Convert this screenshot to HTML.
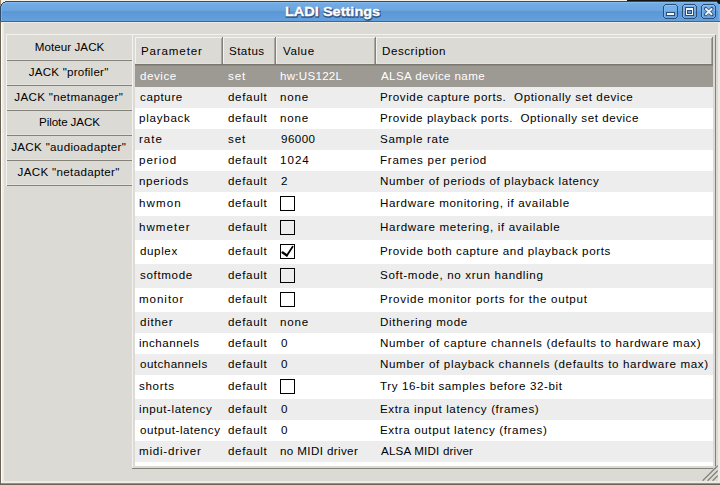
<!DOCTYPE html>
<html><head><meta charset="utf-8"><title>LADI Settings</title>
<style>
html,body{margin:0;padding:0;background:#dcdad5;overflow:hidden;}
svg{display:block;font-family:"Liberation Sans",sans-serif;}
</style></head><body>
<svg width="720" height="485" viewBox="0 0 720 485" shape-rendering="crispEdges">
<rect x="0" y="0" width="720" height="485" fill="#dcdad5"/>
<rect x="0" y="21" width="1" height="464" fill="#6b6254"/>
<rect x="1" y="22" width="1" height="462" fill="#ffffff"/>
<rect x="2" y="22" width="2" height="460" fill="#eeebe6"/>
<rect x="718" y="22" width="2" height="460" fill="#eeebe6"/>
<rect x="2" y="481" width="718" height="2" fill="#eeebe6"/>
<rect x="1" y="483" width="719" height="1" fill="#9a9182"/>
<rect x="0" y="484" width="720" height="1" fill="#6b6254"/>
<rect x="1" y="22" width="719" height="1" fill="#ede8e1"/>
<rect x="0" y="0" width="627" height="1" fill="#f7f0e4"/>
<rect x="627" y="0" width="93" height="1" fill="#141410"/>
<rect x="0" y="0" width="1" height="6" fill="#9c8a6d"/>
<rect x="1" y="1" width="4" height="1" fill="#f7f0e4"/>
<rect x="1" y="2" width="2" height="1" fill="#f7f0e4"/>
<rect x="1" y="3" width="1" height="1" fill="#f7f0e4"/>
<rect x="717" y="1" width="3" height="1" fill="#141410"/>
<rect x="718" y="2" width="2" height="1" fill="#141410"/>
<rect x="719" y="3" width="1" height="1" fill="#141410"/>
<rect x="5" y="1" width="712" height="1" fill="#2c4b70"/>
<rect x="3" y="2" width="2" height="1" fill="#2c4b70"/>
<rect x="2" y="3" width="1" height="1" fill="#2c4b70"/>
<rect x="1" y="4" width="1" height="2" fill="#2c4b70"/>
<rect x="0" y="6" width="1" height="15" fill="#2d4a6a"/>
<rect x="717" y="2" width="1" height="1" fill="#2c4b70"/>
<rect x="718" y="3" width="1" height="1" fill="#2c4b70"/>
<rect x="5" y="2" width="712" height="1" fill="#84baee"/>
<rect x="3" y="3" width="715" height="1" fill="#74ace5"/>
<rect x="2" y="4" width="718" height="1" fill="#72aae4"/>
<rect x="2" y="5" width="718" height="1" fill="#71a9e3"/>
<rect x="1" y="6" width="719" height="1" fill="#70a8e2"/>
<rect x="1" y="7" width="719" height="1" fill="#6fa7e1"/>
<rect x="1" y="8" width="719" height="1" fill="#6ea6e1"/>
<rect x="1" y="9" width="719" height="1" fill="#6da5e0"/>
<rect x="1" y="10" width="719" height="1" fill="#6ba4df"/>
<rect x="1" y="11" width="719" height="1" fill="#5b98d6"/>
<rect x="1" y="12" width="719" height="1" fill="#5b98d6"/>
<rect x="1" y="13" width="719" height="1" fill="#5c99d7"/>
<rect x="1" y="14" width="719" height="1" fill="#5d9ad7"/>
<rect x="1" y="15" width="719" height="1" fill="#5e9bd8"/>
<rect x="1" y="16" width="719" height="1" fill="#5f9cd9"/>
<rect x="1" y="17" width="719" height="1" fill="#609dda"/>
<rect x="1" y="18" width="719" height="1" fill="#619edb"/>
<rect x="1" y="19" width="719" height="1" fill="#629fdb"/>
<rect x="1" y="20" width="719" height="1" fill="#63a0dc"/>
<rect x="1" y="6" width="1" height="15" fill="#7ab3ea"/>
<rect x="3" y="3" width="2" height="1" fill="#84baee"/>
<rect x="2" y="4" width="1" height="2" fill="#84baee"/>
<rect x="719" y="4" width="1" height="17" fill="#7ab3ea"/>
<rect x="718" y="4" width="1" height="17" fill="#6fa9e3"/>
<rect x="0" y="21" width="720" height="1" fill="#3668a0"/>
<text x="285.5" y="16.5" fill="#2e5583" stroke="#2e5583" stroke-width="1.6" stroke-linejoin="round" font-size="13.2" font-weight="bold" textLength="95.2" lengthAdjust="spacingAndGlyphs" shape-rendering="auto">LADI Settings</text>
<text x="285" y="16" fill="#ffffff" stroke="#ffffff" stroke-width="0.35" font-size="13.2" font-weight="bold" textLength="95.2" lengthAdjust="spacingAndGlyphs">LADI Settings</text>
<rect x="664" y="5" width="13" height="6" fill="#77b0e8"/>
<rect x="664" y="11" width="13" height="7" fill="#68a3df"/>
<rect x="665" y="5" width="11" height="1" fill="#8cc2f2"/>
<rect x="664" y="6" width="1" height="11" fill="#7fb7ec"/>
<rect x="665" y="4" width="11" height="1" fill="#2c4f78"/>
<rect x="665" y="18" width="11" height="1" fill="#2c4f78"/>
<rect x="663" y="6" width="1" height="11" fill="#2c4f78"/>
<rect x="677" y="6" width="1" height="11" fill="#2c4f78"/>
<rect x="664" y="5" width="1" height="1" fill="#2c4f78"/>
<rect x="676" y="5" width="1" height="1" fill="#2c4f78"/>
<rect x="664" y="17" width="1" height="1" fill="#2c4f78"/>
<rect x="676" y="17" width="1" height="1" fill="#2c4f78"/>
<rect x="683" y="5" width="13" height="6" fill="#77b0e8"/>
<rect x="683" y="11" width="13" height="7" fill="#68a3df"/>
<rect x="684" y="5" width="11" height="1" fill="#8cc2f2"/>
<rect x="683" y="6" width="1" height="11" fill="#7fb7ec"/>
<rect x="684" y="4" width="11" height="1" fill="#2c4f78"/>
<rect x="684" y="18" width="11" height="1" fill="#2c4f78"/>
<rect x="682" y="6" width="1" height="11" fill="#2c4f78"/>
<rect x="696" y="6" width="1" height="11" fill="#2c4f78"/>
<rect x="683" y="5" width="1" height="1" fill="#2c4f78"/>
<rect x="695" y="5" width="1" height="1" fill="#2c4f78"/>
<rect x="683" y="17" width="1" height="1" fill="#2c4f78"/>
<rect x="695" y="17" width="1" height="1" fill="#2c4f78"/>
<rect x="702" y="5" width="13" height="6" fill="#77b0e8"/>
<rect x="702" y="11" width="13" height="7" fill="#68a3df"/>
<rect x="703" y="5" width="11" height="1" fill="#8cc2f2"/>
<rect x="702" y="6" width="1" height="11" fill="#7fb7ec"/>
<rect x="703" y="4" width="11" height="1" fill="#2c4f78"/>
<rect x="703" y="18" width="11" height="1" fill="#2c4f78"/>
<rect x="701" y="6" width="1" height="11" fill="#2c4f78"/>
<rect x="715" y="6" width="1" height="11" fill="#2c4f78"/>
<rect x="702" y="5" width="1" height="1" fill="#2c4f78"/>
<rect x="714" y="5" width="1" height="1" fill="#2c4f78"/>
<rect x="702" y="17" width="1" height="1" fill="#2c4f78"/>
<rect x="714" y="17" width="1" height="1" fill="#2c4f78"/>
<rect x="666" y="12" width="9" height="4" fill="#2c4f78"/>
<rect x="667" y="13" width="7" height="2" fill="#f4f8fc"/>
<rect x="685" y="7" width="9" height="9" fill="#2c4f78"/>
<rect x="686" y="8" width="7" height="7" fill="#f4f8fc"/>
<rect x="687" y="10" width="5" height="4" fill="#2c4f78"/>
<rect x="688" y="11" width="3" height="2" fill="#5f9cd9"/>
<path d="M705.7,8.7 L711.8,14.5 M711.8,8.7 L705.7,14.5" stroke="#2c4f78" stroke-width="3.5" stroke-linecap="round" shape-rendering="auto"/>
<path d="M706.0,9.0 L711.5,14.2 M711.5,9.0 L706.0,14.2" stroke="#eef4fb" stroke-width="2" stroke-linecap="round" shape-rendering="auto"/>
<rect x="6" y="34" width="709" height="1" fill="#f3f2ef"/>
<rect x="132" y="34" width="1" height="434" fill="#f3f2ef"/>
<rect x="132" y="468" width="584" height="1" fill="#85827a"/>
<rect x="715" y="35" width="1" height="434" fill="#85827a"/>
<rect x="6" y="34" width="1" height="152" fill="#f3f2ef"/>
<rect x="7" y="59" width="125" height="1" fill="#e6e4e0"/>
<rect x="7" y="60" width="125" height="1" fill="#85827a"/>
<text x="69.5" y="51" fill="#000" font-size="11.6" text-anchor="middle" textLength="69.6" lengthAdjust="spacing" xml:space="preserve">Moteur JACK</text>
<rect x="7" y="84" width="125" height="1" fill="#e6e4e0"/>
<rect x="7" y="85" width="125" height="1" fill="#85827a"/>
<text x="68.5" y="76" fill="#000" font-size="11.6" text-anchor="middle" textLength="79.5" lengthAdjust="spacing" xml:space="preserve">JACK &quot;profiler&quot;</text>
<rect x="7" y="109" width="125" height="1" fill="#e6e4e0"/>
<rect x="7" y="110" width="125" height="1" fill="#85827a"/>
<text x="68.5" y="101" fill="#000" font-size="11.6" text-anchor="middle" textLength="108.5" lengthAdjust="spacing" xml:space="preserve">JACK &quot;netmanager&quot;</text>
<rect x="7" y="134" width="125" height="1" fill="#e6e4e0"/>
<rect x="7" y="135" width="125" height="1" fill="#85827a"/>
<text x="69.5" y="126" fill="#000" font-size="11.6" text-anchor="middle" textLength="60.8" lengthAdjust="spacing" xml:space="preserve">Pilote JACK</text>
<rect x="7" y="159" width="125" height="1" fill="#e6e4e0"/>
<rect x="7" y="160" width="125" height="1" fill="#85827a"/>
<text x="68.5" y="151" fill="#000" font-size="11.6" text-anchor="middle" textLength="114.7" lengthAdjust="spacing" xml:space="preserve">JACK &quot;audioadapter&quot;</text>
<rect x="7" y="184" width="125" height="1" fill="#e6e4e0"/>
<rect x="7" y="185" width="125" height="1" fill="#85827a"/>
<text x="68.5" y="176" fill="#000" font-size="11.6" text-anchor="middle" textLength="101.9" lengthAdjust="spacing" xml:space="preserve">JACK &quot;netadapter&quot;</text>
<rect x="135" y="37" width="578" height="429" fill="#ffffff"/>
<rect x="135" y="37" width="88" height="28" fill="#dcdad5"/>
<rect x="135" y="37" width="88" height="1" fill="#f3f2ef"/>
<rect x="135" y="37" width="1" height="27" fill="#f3f2ef"/>
<rect x="135" y="63" width="88" height="1" fill="#e4e2de"/>
<rect x="221" y="38" width="1" height="26" fill="#a9a69f"/>
<rect x="222" y="37" width="1" height="28" fill="#85827a"/>
<text x="141.0" y="55" fill="#000" font-size="11.6" textLength="60.9" lengthAdjust="spacing" xml:space="preserve">Parameter</text>
<rect x="223" y="37" width="53" height="28" fill="#dcdad5"/>
<rect x="223" y="37" width="53" height="1" fill="#f3f2ef"/>
<rect x="223" y="37" width="1" height="27" fill="#f3f2ef"/>
<rect x="223" y="63" width="53" height="1" fill="#e4e2de"/>
<rect x="274" y="38" width="1" height="26" fill="#a9a69f"/>
<rect x="275" y="37" width="1" height="28" fill="#85827a"/>
<text x="229.0" y="55" fill="#000" font-size="11.6" textLength="35.1" lengthAdjust="spacing" xml:space="preserve">Status</text>
<rect x="276" y="37" width="100" height="28" fill="#dcdad5"/>
<rect x="276" y="37" width="100" height="1" fill="#f3f2ef"/>
<rect x="276" y="37" width="1" height="27" fill="#f3f2ef"/>
<rect x="276" y="63" width="100" height="1" fill="#e4e2de"/>
<rect x="374" y="38" width="1" height="26" fill="#a9a69f"/>
<rect x="375" y="37" width="1" height="28" fill="#85827a"/>
<text x="283.0" y="55" fill="#000" font-size="11.6" textLength="31.1" lengthAdjust="spacing" xml:space="preserve">Value</text>
<rect x="376" y="37" width="337" height="28" fill="#dcdad5"/>
<rect x="376" y="37" width="337" height="1" fill="#f3f2ef"/>
<rect x="376" y="37" width="1" height="27" fill="#f3f2ef"/>
<rect x="376" y="63" width="337" height="1" fill="#e4e2de"/>
<rect x="711" y="38" width="1" height="26" fill="#a9a69f"/>
<rect x="712" y="37" width="1" height="28" fill="#85827a"/>
<text x="382.0" y="55" fill="#000" font-size="11.6" textLength="63.5" lengthAdjust="spacing" xml:space="preserve">Description</text>
<rect x="135" y="64" width="578" height="1" fill="#7b786f"/>
<rect x="135" y="65" width="578" height="1" fill="#8a877f"/>
<rect x="135" y="66" width="578" height="21" fill="#9d9993"/>
<text x="140.0" y="80" fill="#ffffff" font-size="11.6" textLength="36.2" lengthAdjust="spacing" xml:space="preserve">device</text>
<text x="228.0" y="80" fill="#ffffff" font-size="11.6" textLength="17.3" lengthAdjust="spacing" xml:space="preserve">set</text>
<text x="280.0" y="80" fill="#ffffff" font-size="11.6" textLength="62.0" lengthAdjust="spacing" xml:space="preserve">hw:US122L</text>
<text x="381.0" y="80" fill="#ffffff" font-size="11.6" textLength="103.7" lengthAdjust="spacing" xml:space="preserve">ALSA device name</text>
<rect x="135" y="87" width="578" height="21" fill="#ededed"/>
<text x="140.0" y="101" fill="#000000" font-size="11.6" textLength="42.3" lengthAdjust="spacing" xml:space="preserve">capture</text>
<text x="228.0" y="101" fill="#000000" font-size="11.6" textLength="38.8" lengthAdjust="spacing" xml:space="preserve">default</text>
<text x="280.0" y="101" fill="#000000" font-size="11.6" textLength="28.2" lengthAdjust="spacing" xml:space="preserve">none</text>
<text x="380.0" y="101" fill="#000000" font-size="11.6" textLength="252.8" lengthAdjust="spacing" xml:space="preserve">Provide capture ports.  Optionally set device</text>
<rect x="135" y="108" width="578" height="21" fill="#ffffff"/>
<text x="139.0" y="122" fill="#000000" font-size="11.6" textLength="50.9" lengthAdjust="spacing" xml:space="preserve">playback</text>
<text x="228.0" y="122" fill="#000000" font-size="11.6" textLength="38.8" lengthAdjust="spacing" xml:space="preserve">default</text>
<text x="280.0" y="122" fill="#000000" font-size="11.6" textLength="28.2" lengthAdjust="spacing" xml:space="preserve">none</text>
<text x="380.0" y="122" fill="#000000" font-size="11.6" textLength="258.4" lengthAdjust="spacing" xml:space="preserve">Provide playback ports.  Optionally set device</text>
<rect x="135" y="129" width="578" height="21" fill="#ededed"/>
<text x="139.0" y="143" fill="#000000" font-size="11.6" textLength="23.0" lengthAdjust="spacing" xml:space="preserve">rate</text>
<text x="228.0" y="143" fill="#000000" font-size="11.6" textLength="17.3" lengthAdjust="spacing" xml:space="preserve">set</text>
<text x="281.0" y="143" fill="#000000" font-size="11.6" textLength="34.0" lengthAdjust="spacing" xml:space="preserve">96000</text>
<text x="380.0" y="143" fill="#000000" font-size="11.6" textLength="69.0" lengthAdjust="spacing" xml:space="preserve">Sample rate</text>
<rect x="135" y="150" width="578" height="21" fill="#ffffff"/>
<text x="139.0" y="164" fill="#000000" font-size="11.6" textLength="37.1" lengthAdjust="spacing" xml:space="preserve">period</text>
<text x="228.0" y="164" fill="#000000" font-size="11.6" textLength="38.8" lengthAdjust="spacing" xml:space="preserve">default</text>
<text x="280.0" y="164" fill="#000000" font-size="11.6" textLength="28.8" lengthAdjust="spacing" xml:space="preserve">1024</text>
<text x="380.0" y="164" fill="#000000" font-size="11.6" textLength="106.3" lengthAdjust="spacing" xml:space="preserve">Frames per period</text>
<rect x="135" y="171" width="578" height="21" fill="#ededed"/>
<text x="139.0" y="185" fill="#000000" font-size="11.6" textLength="49.2" lengthAdjust="spacing" xml:space="preserve">nperiods</text>
<text x="228.0" y="185" fill="#000000" font-size="11.6" textLength="38.8" lengthAdjust="spacing" xml:space="preserve">default</text>
<text x="281.0" y="185" fill="#000000" font-size="11.6" textLength="8.2" lengthAdjust="spacing" xml:space="preserve">2</text>
<text x="380.0" y="185" fill="#000000" font-size="11.6" textLength="218.8" lengthAdjust="spacing" xml:space="preserve">Number of periods of playback latency</text>
<rect x="135" y="192" width="578" height="24" fill="#ffffff"/>
<text x="139.0" y="207" fill="#000000" font-size="11.6" textLength="41.6" lengthAdjust="spacing" xml:space="preserve">hwmon</text>
<text x="228.0" y="207" fill="#000000" font-size="11.6" textLength="38.8" lengthAdjust="spacing" xml:space="preserve">default</text>
<rect x="280.5" y="196.5" width="14" height="14" fill="none" stroke="#000" stroke-width="1"/>
<text x="380.0" y="207" fill="#000000" font-size="11.6" textLength="189.1" lengthAdjust="spacing" xml:space="preserve">Hardware monitoring, if available</text>
<rect x="135" y="216" width="578" height="24" fill="#ededed"/>
<text x="139.0" y="231" fill="#000000" font-size="11.6" textLength="50.5" lengthAdjust="spacing" xml:space="preserve">hwmeter</text>
<text x="228.0" y="231" fill="#000000" font-size="11.6" textLength="38.8" lengthAdjust="spacing" xml:space="preserve">default</text>
<rect x="280.5" y="220.5" width="14" height="14" fill="none" stroke="#000" stroke-width="1"/>
<text x="380.0" y="231" fill="#000000" font-size="11.6" textLength="179.8" lengthAdjust="spacing" xml:space="preserve">Hardware metering, if available</text>
<rect x="135" y="240" width="578" height="24" fill="#ffffff"/>
<text x="140.0" y="255" fill="#000000" font-size="11.6" textLength="37.2" lengthAdjust="spacing" xml:space="preserve">duplex</text>
<text x="228.0" y="255" fill="#000000" font-size="11.6" textLength="38.8" lengthAdjust="spacing" xml:space="preserve">default</text>
<rect x="280.5" y="244.5" width="14" height="14" fill="none" stroke="#000" stroke-width="1"/>
<path d="M282.6,252.4 L286.9,255.4" fill="none" stroke="#000" stroke-width="2.4" stroke-linecap="round" shape-rendering="auto"/>
<path d="M286.9,255.4 L292.6,246.7" fill="none" stroke="#000" stroke-width="1.8" stroke-linecap="round" shape-rendering="auto"/>
<text x="380.0" y="255" fill="#000000" font-size="11.6" textLength="230.3" lengthAdjust="spacing" xml:space="preserve">Provide both capture and playback ports</text>
<rect x="135" y="264" width="578" height="24" fill="#ededed"/>
<text x="140.0" y="279" fill="#000000" font-size="11.6" textLength="52.2" lengthAdjust="spacing" xml:space="preserve">softmode</text>
<text x="228.0" y="279" fill="#000000" font-size="11.6" textLength="38.8" lengthAdjust="spacing" xml:space="preserve">default</text>
<rect x="280.5" y="268.5" width="14" height="14" fill="none" stroke="#000" stroke-width="1"/>
<text x="380.0" y="279" fill="#000000" font-size="11.6" textLength="162.9" lengthAdjust="spacing" xml:space="preserve">Soft-mode, no xrun handling</text>
<rect x="135" y="288" width="578" height="24" fill="#ffffff"/>
<text x="139.0" y="303" fill="#000000" font-size="11.6" textLength="44.3" lengthAdjust="spacing" xml:space="preserve">monitor</text>
<text x="228.0" y="303" fill="#000000" font-size="11.6" textLength="38.8" lengthAdjust="spacing" xml:space="preserve">default</text>
<rect x="280.5" y="292.5" width="14" height="14" fill="none" stroke="#000" stroke-width="1"/>
<text x="380.0" y="303" fill="#000000" font-size="11.6" textLength="206.9" lengthAdjust="spacing" xml:space="preserve">Provide monitor ports for the output</text>
<rect x="135" y="312" width="578" height="21" fill="#ededed"/>
<text x="140.0" y="326" fill="#000000" font-size="11.6" textLength="32.6" lengthAdjust="spacing" xml:space="preserve">dither</text>
<text x="228.0" y="326" fill="#000000" font-size="11.6" textLength="38.8" lengthAdjust="spacing" xml:space="preserve">default</text>
<text x="280.0" y="326" fill="#000000" font-size="11.6" textLength="28.2" lengthAdjust="spacing" xml:space="preserve">none</text>
<text x="380.0" y="326" fill="#000000" font-size="11.6" textLength="87.3" lengthAdjust="spacing" xml:space="preserve">Dithering mode</text>
<rect x="135" y="333" width="578" height="21" fill="#ffffff"/>
<text x="139.0" y="347" fill="#000000" font-size="11.6" textLength="60.0" lengthAdjust="spacing" xml:space="preserve">inchannels</text>
<text x="228.0" y="347" fill="#000000" font-size="11.6" textLength="38.8" lengthAdjust="spacing" xml:space="preserve">default</text>
<text x="281.0" y="347" fill="#000000" font-size="11.6" textLength="8.2" lengthAdjust="spacing" xml:space="preserve">0</text>
<text x="380.0" y="347" fill="#000000" font-size="11.6" textLength="320.6" lengthAdjust="spacing" xml:space="preserve">Number of capture channels (defaults to hardware max)</text>
<rect x="135" y="354" width="578" height="21" fill="#ededed"/>
<text x="140.0" y="368" fill="#000000" font-size="11.6" textLength="67.2" lengthAdjust="spacing" xml:space="preserve">outchannels</text>
<text x="228.0" y="368" fill="#000000" font-size="11.6" textLength="38.8" lengthAdjust="spacing" xml:space="preserve">default</text>
<text x="281.0" y="368" fill="#000000" font-size="11.6" textLength="8.2" lengthAdjust="spacing" xml:space="preserve">0</text>
<text x="380.0" y="368" fill="#000000" font-size="11.6" textLength="328.1" lengthAdjust="spacing" xml:space="preserve">Number of playback channels (defaults to hardware max)</text>
<rect x="135" y="375" width="578" height="24" fill="#ffffff"/>
<text x="139.0" y="390" fill="#000000" font-size="11.6" textLength="35.0" lengthAdjust="spacing" xml:space="preserve">shorts</text>
<text x="228.0" y="390" fill="#000000" font-size="11.6" textLength="38.8" lengthAdjust="spacing" xml:space="preserve">default</text>
<rect x="280.5" y="379.5" width="14" height="14" fill="none" stroke="#000" stroke-width="1"/>
<text x="380.0" y="390" fill="#000000" font-size="11.6" textLength="182.0" lengthAdjust="spacing" xml:space="preserve">Try 16-bit samples before 32-bit</text>
<rect x="135" y="399" width="578" height="21" fill="#ededed"/>
<text x="139.0" y="413" fill="#000000" font-size="11.6" textLength="72.8" lengthAdjust="spacing" xml:space="preserve">input-latency</text>
<text x="228.0" y="413" fill="#000000" font-size="11.6" textLength="38.8" lengthAdjust="spacing" xml:space="preserve">default</text>
<text x="281.0" y="413" fill="#000000" font-size="11.6" textLength="8.2" lengthAdjust="spacing" xml:space="preserve">0</text>
<text x="380.0" y="413" fill="#000000" font-size="11.6" textLength="158.7" lengthAdjust="spacing" xml:space="preserve">Extra input latency (frames)</text>
<rect x="135" y="420" width="578" height="21" fill="#ffffff"/>
<text x="140.0" y="434" fill="#000000" font-size="11.6" textLength="80.0" lengthAdjust="spacing" xml:space="preserve">output-latency</text>
<text x="228.0" y="434" fill="#000000" font-size="11.6" textLength="38.8" lengthAdjust="spacing" xml:space="preserve">default</text>
<text x="281.0" y="434" fill="#000000" font-size="11.6" textLength="8.2" lengthAdjust="spacing" xml:space="preserve">0</text>
<text x="380.0" y="434" fill="#000000" font-size="11.6" textLength="166.9" lengthAdjust="spacing" xml:space="preserve">Extra output latency (frames)</text>
<rect x="135" y="441" width="578" height="21" fill="#ededed"/>
<text x="139.0" y="455" fill="#000000" font-size="11.6" textLength="61.9" lengthAdjust="spacing" xml:space="preserve">midi-driver</text>
<text x="228.0" y="455" fill="#000000" font-size="11.6" textLength="38.8" lengthAdjust="spacing" xml:space="preserve">default</text>
<text x="280.0" y="455" fill="#000000" font-size="11.6" textLength="77.8" lengthAdjust="spacing" xml:space="preserve">no MIDI driver</text>
<text x="381.0" y="455" fill="#000000" font-size="11.6" textLength="91.9" lengthAdjust="spacing" xml:space="preserve">ALSA MIDI driver</text>
<path d="M701.8,480.5 L717.5,464.8 M706.8,480.5 L717.5,469.8 M711.8,480.5 L717.5,474.8" stroke="#f6f5f2" stroke-width="1" fill="none" shape-rendering="auto"/>
<path d="M703,480.3 L717.3,466 M708,480.3 L717.3,471 M713,480.3 L717.3,476" stroke="#87847c" stroke-width="1.5" fill="none" stroke-linecap="round" shape-rendering="auto"/>
</svg>
</body></html>
